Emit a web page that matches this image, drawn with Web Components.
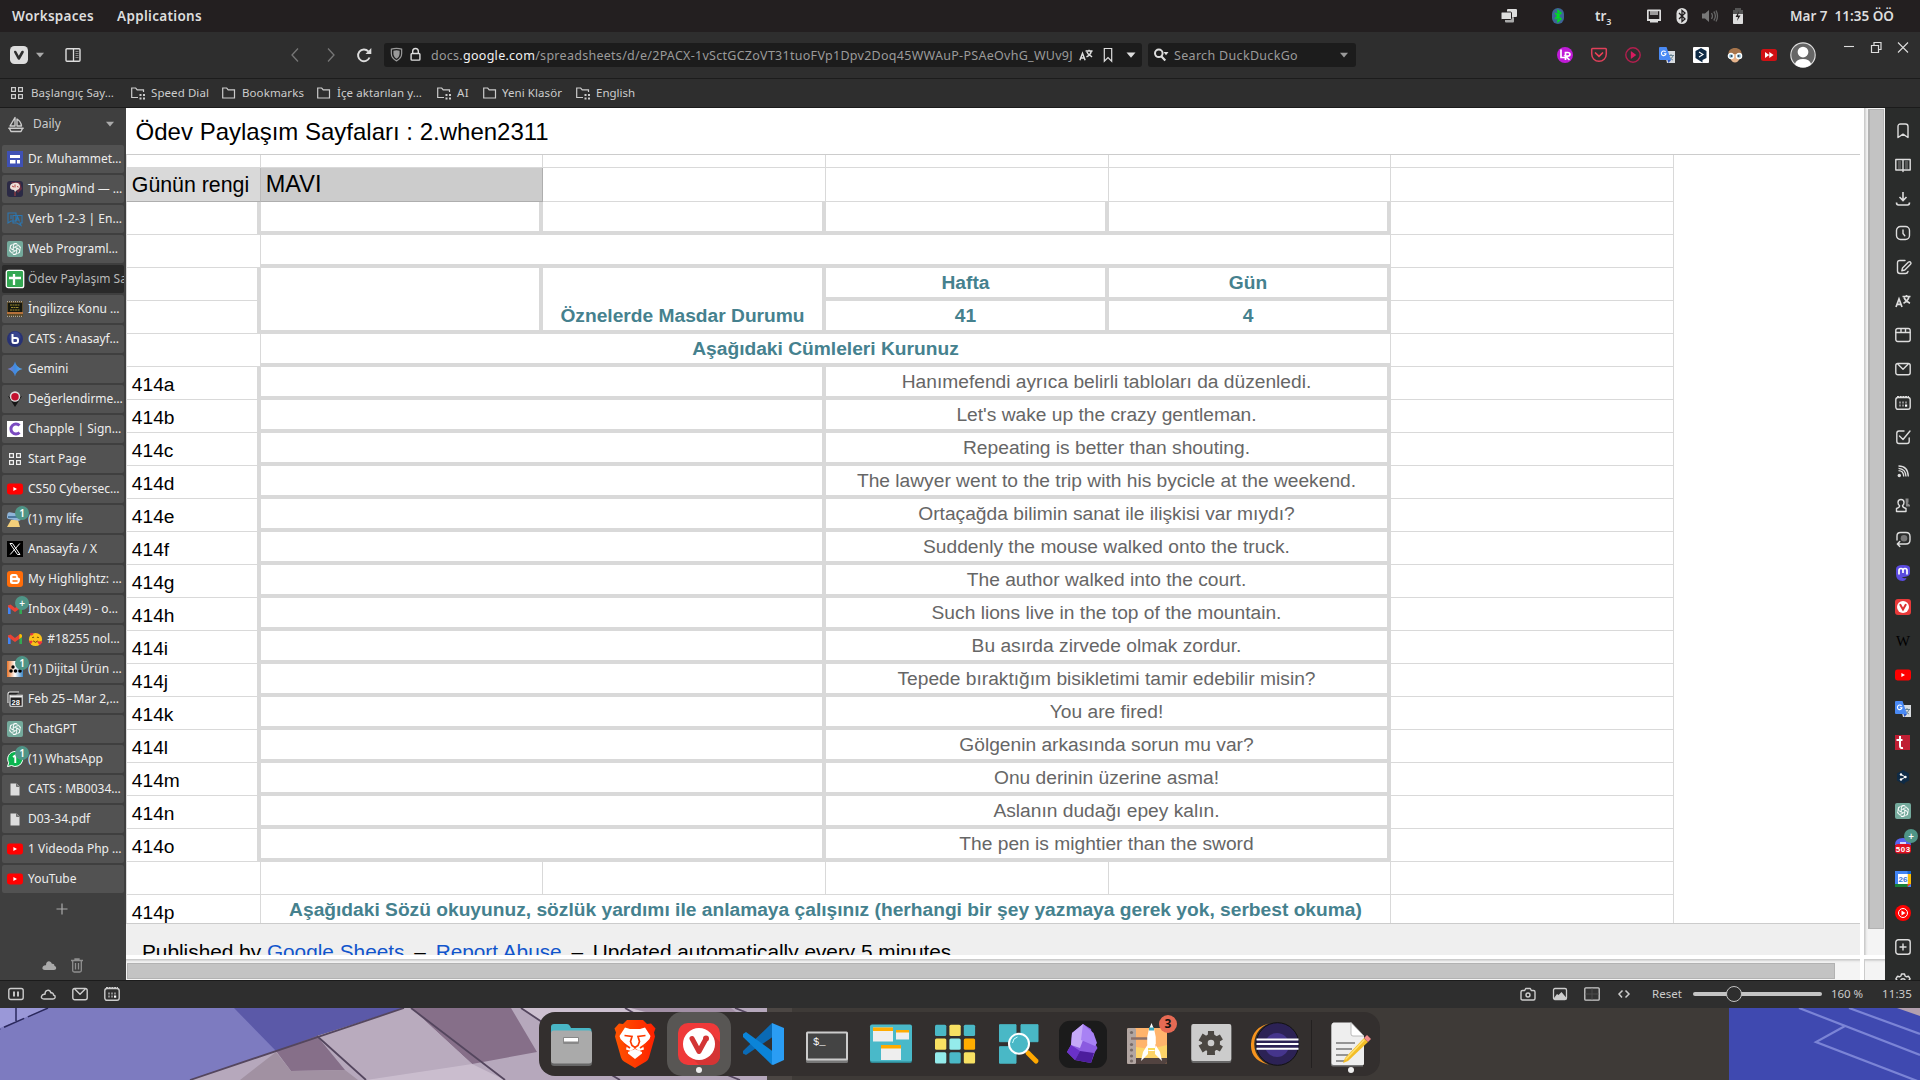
<!DOCTYPE html>
<html lang="tr"><head><meta charset="utf-8"><title>Ödev Paylaşım Sayfaları</title>
<style>html,body{margin:0;height:100%;overflow:hidden;background:#3e3a37}body{font-family:"Noto Sans","Liberation Sans",sans-serif}</style></head>
<body><desk-top></desk-top>
<script>
const S='fill="none" stroke="currentColor" stroke-width="1.4" stroke-linecap="round" stroke-linejoin="round"';
const gpt='<rect width="16" height="16" rx="2" fill="#74aa9c"/><g fill="none" stroke="#fff" stroke-width=".9">'+[0,60,120,180,240,300].map(a=>`<path d="M8 6l2-1.1c1.6-.8 3.6.4 3.4 2.3" transform="rotate(${a} 8 8)"/>`).join('')+'<path d="M8 6l1.8 1v2L8 10 6.2 9V7z"/><circle cx="8" cy="8" r="5.3" stroke-width=".6"/></g>';
const yt='<rect y="2.5" width="16" height="11" rx="2.4" fill="#f00"/><path d="M6.4 5.9v4.2L10 8z" fill="#fff"/>';
const gm='<path d="M1 4v9h2.6V7.2z" fill="#4285f4"/><path d="M15 4v9h-2.6V7.2z" fill="#34a853"/><path d="M1 4.4l2.6-1 4.4 3.500 4.400-3.500L15 4.400v1.500L8 11 1 6z" fill="#ea4335"/><path d="M12.400 3.400c1.200-.8 2.600 0 2.600 1.400V6l-2.600 2z" fill="#fbbc04"/>';
const gt='<path d="M5 4h11v12H8z" fill="#d8dce0"/><path d="M9 8.500h6M12 7v1.500M14 8.500c-.5 2-2 3.500-4 4.500M10.500 10c1 1.500 2 2.500 3.500 3" stroke="#607d8b" fill="none" stroke-width=".9"/><path d="M0 1q0-1 1-1h6.500L12 13H1q-1 0-1-1z" fill="#4a8af4"/><path d="M8.500 13h3.500l-2.500 3z" fill="#2a56c6"/><path d="M6.600 5A2.300 2.300 0 1 0 7 6.700H4.900" fill="none" stroke="#fff" stroke-width="1.100"/>';
const page='<path d="M3.500 2.500h6l3 3v9h-9z" fill="#ddd"/><path d="M9.500 2.500v3h3" fill="#888" stroke="#555" stroke-width=".7"/>';
const mail=`<rect x=".8" y="2.500" width="14.400" height="11.300" rx="2" ${S}/><path d="M3 3.200l5 5 5-5" ${S}/>`;
const cal=`<rect x=".8" y="2.500" width="14.400" height="11.800" rx="2.200" ${S}/><path d="M2 2h12" stroke="currentColor" stroke-width="2.200" stroke-dasharray="2 .7"/><path d="M4 7.500h8M4 10.500h5.500" stroke="#8a8a8a" stroke-width="1.800" stroke-dasharray="2 1"/><rect x="10" y="9.500" width="2.200" height="2.200" fill="#fff"/>`;
const folder='<path d="M1.700 3h4l1.500 1.800h6.300V13H1.700z" fill="none" stroke="currentColor" stroke-width="1.200"/>';
const grid='<g fill="none" stroke="currentColor" stroke-width="1.200"><rect x="2.600" y="2.600" width="3.800" height="3.800"/><rect x="9.600" y="2.600" width="3.800" height="3.800"/><rect x="2.600" y="9.600" width="3.800" height="3.800"/><rect x="9.600" y="9.600" width="3.800" height="3.800"/></g>';
const trans='<path d="M1 14l3-8 3 8M2 11.300h4M7.500 3.500h8M11.500 2v1.500M14 3.700c-.6 3-2.500 5-5.500 6.500M9 4.500c1 2.500 3 4.500 6 5.700" fill="none" stroke="currentColor" stroke-width="1.700"/>';
const cloudp='M4 13h9c2.700 0 3-3.400.5-4C13.500 7 12 6.500 11 7 9.500 2.500 4.800 4 5 8.300 1.500 7.500-.5 13 4 13z';
const I={
viv:'<rect x="-1" y="-1" width="18" height="18" rx="4.500" fill="#ddd"/><path d="M4.300 5l3.500 6.500L11.500 5" fill="none" stroke="#2e2e2e" stroke-width="2.600" stroke-linecap="round" stroke-linejoin="round"/>',
caret:'<path d="M4 5.700h8L8 10.500z" fill="currentColor"/>',
panel:'<rect x="1" y="1.700" width="14" height="12.600" rx="1" fill="none" stroke="currentColor" stroke-width="1.400"/><path d="M8.500 2v12" stroke="currentColor" stroke-width="1.300"/><path d="M10.500 4.500h3M10.500 6.500h3M10.500 8.500h3M10.500 10.500h3" stroke="#888"/>',
back:'<path d="M11 1.500L5 8l6 6.500" fill="none" stroke="currentColor" stroke-width="1.300"/>',
fwd:'<path d="M5 1.500L11 8l-6 6.500" fill="none" stroke="currentColor" stroke-width="1.300"/>',
reload:'<path d="M13.500 10.500A5.900 5.900 0 1 1 12.300 4.300" fill="none" stroke="currentColor" stroke-width="1.900"/><path d="M15.300 1v6H9.500z" fill="currentColor"/>',
shield:'<path d="M2.500 2.300Q8 .7 13.500 2.300V7Q13.500 12 8 14.800 2.500 12 2.500 7z" fill="none" stroke="currentColor" stroke-width="1.300"/><path d="M4.700 4Q8 3 11.300 4v3q0 3.500-3.300 5.500Q4.700 10.500 4.700 7z" fill="#999"/>',
lock:'<rect x="3.300" y="7" width="9.400" height="7" rx="1" fill="none" stroke="#ddd" stroke-width="1.500"/><path d="M5 7V4.600a3 3 0 0 1 6 0V7" fill="none" stroke="#ddd" stroke-width="1.500"/>',
trans,bm:'<path d="M4.300 1.500h7.400v12.700L8 10.500l-3.700 3.700z" fill="none" stroke="currentColor" stroke-width="1.200"/>',
mag:'<circle cx="5.800" cy="6.300" r="3.800" fill="none" stroke="currentColor" stroke-width="2"/><path d="M8.500 9.500l3.800 4" stroke="currentColor" stroke-width="2.200"/><path d="M10.500 5h5L13 8.200z" fill="currentColor"/>',
grid,folder,sfolder:'<path d="M8 12.500H1.700V3h4l1.500 1.800h6.300V7" fill="none" stroke="currentColor" stroke-width="1.200"/><path d="M9.500 9h2v2h-2zM13 9h2v2h-2zM9.500 12.500h2v2h-2zM13 12.500h2v2h-2z" fill="currentColor"/>',
wins:'<rect x="6" y="1" width="10" height="8" rx="1" fill="#ddd"/><rect x="4" y="9" width="9" height="5.500" rx="1" fill="#aaa"/><rect x="0" y="4" width="10.500" height="7.500" rx="1" fill="#ddd" stroke="#231f20"/>',
btb:'<rect x="2" width="12" height="16" rx="6" fill="#3e6496"/><path d="M5 5l6 6-3 2.500v-11L11 5l-6 6" fill="none" stroke="#0d2" stroke-width="1.500"/>',
btw:'<rect x="2.500" width="11" height="16" rx="5.500" fill="#ddd"/><path d="M5 5l6 6-3 2.500v-11L11 5l-6 6" fill="none" stroke="#231f20" stroke-width="1.300"/>',
eth:'<path d="M2 1.500h12q1 0 1 1V13h-3v1.500H4V13H1V2.500q0-1 1-1z" fill="#ddd"/><path d="M2.700 3.200h10.600V11H2.700z" fill="#231f20"/><path d="M5 3v4M7 3v4M9 3v4M11 3v4" stroke="#ddd" stroke-width="1.300"/>',
spk:'<path d="M0 5.500h3l4-3.500v12L3 10.500H0z" fill="#777"/><path d="M9.500 5q2 3 0 6M11.800 3.500q3.200 4.500 0 9M14 2.500q3 5.500 0 11" fill="none" stroke="#666" stroke-width="1.300"/>',
bat:'<path d="M5 0h6v2h2v14H3V2h2z" fill="#555"/><path d="M3 6h10v9q0 1-1 1H4q-1 0-1-1z" fill="#ddd"/><path d="M9 3L5.500 9H8l-1 4 3.500-5.500H8z" fill="#231f20"/>',
lr:'<circle cx="8" cy="8" r="8" fill="#c01bd8"/><path d="M4 2.500v8h3.800M8.500 13V5.500h2.200c3 0 3 3.700 0 3.700H8.500l4 3.800" fill="none" stroke="#fff" stroke-width="1.700"/>',
pocket:'<path d="M1.500 1.500h13q.8 0 .8.8V7a7.300 7.300 0 0 1-14.600 0V2.300q0-.8.8-.8z" fill="none" stroke="#e0405a" stroke-width="1.500"/><path d="M4.500 6L8 9.300 11.500 6" fill="none" stroke="#ef4056" stroke-width="1.700" stroke-linecap="round"/>',
play:'<circle cx="8" cy="8" r="7.200" fill="none" stroke="#b21f4e" stroke-width="1.400"/><path d="M5.800 4v8l5.500-4z" fill="#d81b60"/>',
gt,deepl:'<rect width="16" height="16" rx="1" fill="#fff"/><path d="M8 1l5.500 3v7L9.500 13v2.500L2.500 11V4z" fill="#0f2b46"/><path d="M6 5l4 2.500L6 10" fill="none" stroke="#fff" stroke-width="1.100"/>',
face:'<path d="M1.500 8C1 3 4 1 8 1s7 2 6.500 7z" fill="#a6754c"/><path d="M3 7h10v4q-2 4.500-5 4.500T3 11z" fill="#e6b48c"/><circle cx="4" cy="9" r="2.700" fill="#9fc8dc" stroke="#fff" stroke-width="1.200"/><circle cx="12" cy="9" r="2.700" fill="#9fc8dc" stroke="#fff" stroke-width="1.200"/><circle cx="4.500" cy="9" r="1" fill="#345"/><circle cx="11.500" cy="9" r="1" fill="#345"/>',
ytff:'<rect y="2" width="16" height="12" rx="2.500" fill="#d01014"/><path d="M4 5v6l4.300-3zM8.300 5v6l4.300-3z" fill="#fff"/>',
avatar:'<circle cx="8" cy="8" r="7.500" fill="#666" stroke="#ddd" stroke-width=".7"/><circle cx="8" cy="6.200" r="3.300" fill="#fff"/><path d="M3 13.500Q4 10.500 8 10.500t5 3Q11 15.600 8 15.600T3 13.500z" fill="#fff"/>',
min:'<path d="M3 6.500h10" stroke="currentColor" stroke-width="1.100"/>',
rest:'<path d="M3.500 5.500h7v7h-7zM6 5.500v-3h7v7h-2.500" fill="none" stroke="currentColor" stroke-width="1.200"/>',
close:'<path d="M3 2.500l10 10M13 2.500l-10 10" stroke="currentColor" stroke-width="1.100"/>',
sail:`<g ${S} stroke-width="1.100"><path d="M7 1.500L2 10h5zM9 3v7h4.500Q13 5.500 9 3zM.8 12.300h14.400M3 15.500h10l1.500-3M3 15.500l-1.500-3"/></g>`,
sites:'<rect width="16" height="16" fill="#3f51b5"/><path d="M3 4h10v3H3zM3 9h5.500v3.500H3zM10 9h3v3.500h-3z" fill="#fff"/>',
typing:'<rect width="16" height="16" rx="3" fill="#2b2a45"/><path d="M4 1h9l2 7-4 4z" fill="#7a3040" opacity=".8"/><path d="M3 6q0-3.500 4-4 5-1 6 3 0 3-3 4l-2 2-1-2Q3 9 3 6z" fill="#eedfd6"/><path d="M5 5l2 1M8 3.500v3M10 5.500l1.500.5M8 11v4" stroke="#b04040" stroke-width="1"/>',
verb:'<path d="M1 2h8v8H4l-3 2zM6 4.500h9V12h-2l1 2.500-4-2.500H6z" fill="none" stroke="#2c76b0" stroke-width="1.100"/><path d="M4 4v4M8.500 10.500l2-5 2 5M9 9h3" stroke="#2c76b0" fill="none" stroke-width="1.200"/>',
gpt,sheets:'<rect x="-.7" y="-.7" width="17.400" height="17.400" rx="2" fill="#34a853" stroke="#fff" stroke-width="1.300"/><path d="M2 7h12M7 3v11" stroke="#fff" stroke-width="2.300"/>',
ing:'<rect width="16" height="16" fill="#5a4a2a"/><rect x="1" y="2" width="14" height="9" fill="#16180f"/><path d="M3 4h10M4 6.500h8M3 9h10" stroke="#9a8a30" stroke-dasharray="2 .5"/><path d="M0 12h16" stroke="#b5713a" stroke-width="2"/><path d="M0 .7h16M0 15.300h16" stroke="#bbb" stroke-width="1" stroke-dasharray="1 1"/>',
bbb:'<circle cx="8" cy="8" r="8" fill="#283274"/><circle cx="8" cy="6" r="5.500" fill="#4a57a5" opacity=".5"/><path d="M5.500 3v7.500q0 1.500 1.500 1.500h2q2 0 2-2V9q0-2-2-2H6" fill="none" stroke="#fff" stroke-width="2"/>',
gem:'<defs><linearGradient id="g"><stop stop-color="#8a7bc8"/><stop offset=".5" stop-color="#3f8ae0"/><stop offset="1" stop-color="#5aa9f0"/></linearGradient></defs><path d="M8 .5Q9.300 6.700 15.500 8 9.300 9.300 8 15.500 6.700 9.300.5 8 6.700 6.700 8 .5z" fill="url(#g)"/>',
deg:'<path d="M1 5l7 11 7-11-3 1-4 5-4-5z" fill="#151515"/><circle cx="8" cy="5.500" r="5.200" fill="#ddd"/><path d="M8 2a3 3 0 0 1 0 7.500A3 3 0 0 1 8 2z" fill="#c3122f"/><path d="M5 4h6M5 7h6" stroke="#c3122f" stroke-width="1.500"/>',
chap:'<rect width="16" height="16" fill="#fff"/><path d="M12.500 4.500a5 5 0 1 0 0 7" fill="none" stroke="#7b4bc0" stroke-width="3"/>',
yt,life:'<path d="M4 9h7l2 7H0z" fill="#f3cf7a"/><rect x="0" y="2" width="14" height="7" rx="2" fill="#8fb4d8" transform="rotate(10 7 6)"/><path d="M1 6h9" stroke="#4b779f" stroke-width="2"/>',
x:'<rect width="16" height="16" fill="#000"/><path d="M3 2.500h2.500l7.500 11h-2.500zM12.800 2.500L3.200 13.500" fill="none" stroke="#fff" stroke-width="1"/>',
blog:'<rect width="16" height="16" rx="3" fill="#ff6d0a"/><path d="M5.500 3h2.800q2.500 0 2.500 2.700 0 1 1 1 1.200 0 1.200 1.500 0 4.800-3.500 4.800h-4q-2.500 0-2.500-2.500V5.500Q3 3 5.500 3z" fill="#fff"/><path d="M6 6h2.500M6 10h4" stroke="#ff6d0a" stroke-width="1.500" stroke-linecap="round"/>',
gm,dij:'<defs><linearGradient id="d"><stop stop-color="#e8762c"/><stop offset=".5" stop-color="#fff"/><stop offset="1" stop-color="#3a86c8"/></linearGradient></defs><rect width="16" height="16" fill="url(#d)"/><circle cx="4" cy="10" r="1.800"/><circle cx="8.500" cy="10" r="1.800"/><circle cx="13" cy="10" r="1.800"/><circle cx="6" cy="6" r="1.700"/>',
notion:'<path d="M1 12V3q0-2 2-2h9M3 4.300h12.200v11H4q-1 0-1-1z" fill="#222" stroke="#eee" stroke-width="1.100"/><path d="M3 5.800h12" stroke="#eee" stroke-width="1.500"/><text x="4.500" y="14" font-size="7.500" font-weight="bold" fill="#fff" font-family="Liberation Sans">28</text>',
wa:'<path d="M8 .5a7.500 7.500 0 1 1-3.500 14L.5 15.600l1.200-3.800A7.500 7.500 0 0 1 8 .5z" fill="#0ab550" stroke="#fff"/><path d="M6 6l2.300-1.500V12" fill="none" stroke="#fff" stroke-width="1.900"/>',
page,cloud:`<path d="${cloudp}" fill="#aaa"/>`,trash:'<path d="M2 3.500h12M6 3.500V2h4v1.500M3.700 4v9.500q0 1.500 1.500 1.500h5.600q1.500 0 1.500-1.500V4M6.500 6v6.500M9.500 6v6.500" fill="none" stroke="#909090" stroke-width="1.300"/>',
plus:'<path d="M8 2.500v11M2.500 8h11" stroke="#aaa" stroke-width="1.200"/>',
pause:`<rect x=".8" y="2.500" width="14.400" height="11" rx="2" ${S}/><path d="M6 5.500v5M10 5.500v5" stroke="currentColor" stroke-width="1.900"/>`,
cloudo:`<path d="${cloudp}" ${S}/>`,mail,cal,
cam:`<path d="M2.500 4.500h2.200l1-2h4.600l1 2h2.200q1.500 0 1.500 1.500v6.500q0 1.500-1.500 1.500h-11Q1 14 1 12.500V6q0-1.500 1.500-1.500z" ${S}/><circle cx="8" cy="9" r="2" ${S}/>`,
img:'<rect x="1.500" y="2.500" width="13" height="11" rx="1.500" fill="none" stroke="currentColor" stroke-width="1.300"/><path d="M2 12l3-4 1.500 1L9.500 6l5 6v1.500H2z" fill="currentColor"/>',
tile:'<rect x=".8" y="1.800" width="14.400" height="12.400" rx="1" fill="#333" stroke="currentColor" stroke-width="1.300"/><path d="M8 2.500v11M1.500 8h13" stroke="#4a4a4a"/>',
code:'<path d="M6.500 4.500L3 8l3 3.500M9.500 4.500L13 8l-3.500 3.500" fill="none" stroke="currentColor" stroke-width="1.500"/>',
pbm:`<path d="M3 14.500V3.500Q3 1 5.500 1h5Q13 1 13 3.500v11l-5-3.300z" ${S}/>`,
book:`<path d="M8 3v11.500M.8 2.500h14.400V13H.8z" ${S}/><path d="M3 5h3M3 7h3M3 9h3M3 11h3M10 5h3M10 7h3M10 9h3M10 11h3" stroke="#888"/>`,
dl:'<path d="M8 1v8M4.500 6L8 9.500 11.500 6M1.500 11.500q0 2.500 2 2.500h9q2 0 2-2.500" fill="none" stroke="currentColor" stroke-width="1.600"/>',
hist:`<rect x="1.500" y="1.500" width="13" height="13" rx="4" ${S}/><path d="M8 5v3.500l1.800 2.200" ${S}/>`,
note:`<path d="M10 1.500H5Q2.500 1.500 2.500 4v8q0 2.500 2.500 2.500h5.500q2 0 2.500-2M7.500 9L13.500 3q1.500-.8 2.300.5.500 1-.3 1.700L9.800 11l-3 .8z" ${S}/>`,
win:`<rect x=".8" y="1.500" width="14.400" height="13" rx="2" ${S}/><path d="M1 5.500h14M6 2v2.500M10.500 2v2.500" ${S}/>`,
task:`<path d="M9 2H4Q1.800 2 1.800 4.200v8Q1.800 14.500 4 14.500h8q2.200 0 2.200-2.300V9M4.500 7l3.500 3.500L15 2" ${S}/>`,
rss:'<circle cx="4.300" cy="12.500" r="1.700" fill="currentColor"/><path d="M3.500 7.700q5 0 5.200 5.800M3.500 3q9.500 0 9.800 10.500M3.500 5.300q7.300.5 7.500 8.200" fill="none" stroke="currentColor" stroke-width="1.300"/>',
cont:`<path d="M10.500 1.500h3v4l-1 .5 2.500 2v1.500h-4z" fill="#888"/><path d="M6 2.500q3 0 3 3 0 2-1.500 3 0 2 3.500 3v3H1.500v-3q3.500-1 3-3Q3 7.500 3 5.500q0-3 3-3z" ${S}/>`,
sess:`<path d="M2 9V5Q2 1.500 5.500 1.500h5.500q4 0 4 4V9q0 4-4 4H2.500M4.800 10.500L2.300 13l2.500 2.500" ${S}/><circle cx="9" cy="7.200" r="3.300" fill="#777"/>`,
mast:'<path d="M8 0q7 0 7 3v5q0 3.500-6 4-2 0-2 .5 1 1 4.500.5-1 3-4 3Q1 16 1 9V4Q1 0 8 0z" fill="#5b4be0"/><path d="M4 9.500V5.500q0-2 2-2t2 2V8 5.500q0-2 2-2t2 2v4" fill="none" stroke="#fff" stroke-width="1.700"/>',
vred:'<rect width="16" height="16" rx="3" fill="#e83a3a"/><circle cx="8" cy="8" r="6" fill="#fff"/><path d="M5.300 5.800l2.700 4.700 2.700-4.700" fill="none" stroke="#d33" stroke-width="2" stroke-linecap="round"/>',
wiki:'<text x="1" y="13" font-size="14" fill="#000" textLength="14" lengthAdjust="spacingAndGlyphs" font-family="Liberation Serif">W</text>',
tur:'<rect width="15" height="15" fill="#c01e33"/><path d="M5 1v10q0 2.500 3 2M1.500 5h6" fill="none" stroke="#fff" stroke-width="2"/>',
deepd:'<path d="M8 1l6 3.500v7L9.500 14v1.500L2 11.500v-7z" fill="#0f2b46"/><path d="M6 5.500l4.500 2.500L6 10.500" fill="none" stroke="#fff"/><circle cx="6" cy="5.500" r="1.200" fill="#fff"/><circle cx="6" cy="10.500" r="1.200" fill="#fff"/><circle cx="10.500" cy="8" r="1.200" fill="#fff"/>',
m503:'<path d="M0 8Q0 1 8 1t8 7z" fill="#5865f2"/><path d="M5 6h6" stroke="#fff" stroke-width="1.500"/><rect y="7" width="16" height="9.500" rx="3" fill="#e01020"/><text x=".8" y="14.600" font-size="8" font-weight="bold" fill="#fff" textLength="14.400" font-family="Liberation Sans">503</text>',
gcal:'<rect width="16" height="16" fill="#4285f4"/><rect x="12.500" y="3" width="3.500" height="10" fill="#fbbc04"/><rect y="13" width="13" height="3" fill="#188038"/><path d="M12.500 13H16l-3.500 3z" fill="#ea4335"/><path d="M12.500 0H16v3h-3.500z" fill="#1967d2"/><rect x="3" y="3" width="9.800" height="10" fill="#fff"/><text x="3.600" y="11.200" font-size="8" font-weight="bold" fill="#3a78d8" font-family="Liberation Sans">26</text>',
ytm:'<circle cx="8" cy="8" r="8" fill="#f00"/><circle cx="8" cy="8" r="4.500" fill="none" stroke="#fff"/><path d="M6.500 5.500v5l4-2.500z" fill="#fff"/>',
add:`<rect x=".8" y=".8" width="14.400" height="14.400" rx="2.500" ${S}/><path d="M8 5v6M5 8h6" ${S}/>`,
gear:`<path d="M6.500 1h3l.6 2 1.500.8 2-.5 1.500 2.600-1.500 1.500v1.500l1.500 1.500-1.500 2.500-2-.5-1.500.8-.6 2h-3l-.6-2-1.500-.8-2 .5L.900 10.400l1.500-1.500V7.400L.900 5.900l1.500-2.600 2 .5L5.900 3z" ${S}/><circle cx="8" cy="8" r="2.300" ${S}/>`,
love:'<circle cx="8" cy="8" r="7" fill="#fcc21b"/><path d="M4.500 6q1-1 2 0M9.500 6q1-1 2 0M5.500 9.500q2.500 3 5 0" fill="none" stroke="#5b3a10"/><path d="M2 2l2 2 2-2-1-1-1 .5L3 1zM10 11l2.500 3 3-3-1.500-1.500-1.500.7L11 9.500zM1 10l2 3 2-3-1-1-1 .5L2 9z" fill="#f0353f"/>'
};
const D={
files:'<path d="M4 15V7q0-3 3-3h13q2 0 3 2l1 2h18q2.500 0 2.500 3v4z" fill="#49b6c6"/><rect x="4" y="12" width="41" height="34" rx="3" fill="#666"/><rect x="4" y="10.500" width="41" height="33" rx="3" fill="#aaa"/><rect x="16" y="17" width="16" height="7" rx="1" fill="#888"/><rect x="17" y="18" width="14" height="3.500" fill="#fff"/>',
brave:'<defs><linearGradient id="b"><stop stop-color="#ff5500"/><stop offset="1" stop-color="#ff2000"/></linearGradient></defs><path d="M16 0h16l4 4 4-.5 4.500 5-1.500 4 1 4-6 21q-.5 2-3 4L24 48 13 41.500q-2.500-2-3-4l-6-21 1-4-1.500-4L8 3.500l4 .5z" fill="url(#b)"/><path d="M24 9l5 0 5-1.500 5.500 8.500-1 3-6.500 6.500 1 4-5 1.500L24 28l-4 3-5-1.500 1-4L9.500 19l-1-3L14 7.500 19 9z" fill="#fff"/><path d="M17 32l7-3 7 3v1.500L24 39l-7-5.500z" fill="#fff"/><path d="M13.500 15.500l7.500 1-1.500 5 1.500 4 3 2 3-2 1.500-4-1.500-5 7.500-1M13 24l6 4M35 24l-6 4" fill="none" stroke="#ff3a00" stroke-width="1.700"/>',
viv:'<rect x="3" y="3" width="42" height="42" rx="10" fill="#ef3939"/><path d="M35 12l10 10v15q-2 8-9 8H24L14 35z" fill="#d53434"/><circle cx="24" cy="24" r="16" fill="#fff"/><path d="M17 18.500l7 13 6-11" fill="none" stroke="#d33535" stroke-width="5" stroke-linecap="round" stroke-linejoin="round"/><circle cx="31" cy="18.500" r="3" fill="#d33535"/>',
code:'<path d="M33 3L4 31v2.500L7 35 35 16z" fill="#0a6ab5"/><path d="M4 14v3l29 28 3-12L7 12z" fill="#0b84d8"/><path d="M33 3l12 5v32l-11 5q-1 0-1-1z" fill="#2a9df4"/>',
term:'<rect x="3" y="13" width="42" height="30" rx="1.500" fill="#777"/><rect x="3" y="11.500" width="42" height="29" rx="1.500" fill="#ccc"/><rect x="5" y="13.500" width="38" height="25" fill="#444"/><text x="10" y="24.500" font-size="10.500" fill="#fff" font-family="Liberation Mono">$_</text>',
wins:'<rect x="3" y="6" width="42" height="37" rx="2" fill="#2f8793"/><rect x="3" y="4.500" width="42" height="37" rx="2" fill="#49b9c9"/><path d="M6 7.500h20v14H6zM29 10h13v9.500H29zM14 25h20v15H14z" fill="#eee"/><path d="M6 7.500h20v3.500H6zM29 10h13v2.500H29zM14 25h20v3.500H14z" fill="#ffab00"/>',
grid:['#4ab8c6','#f8e163','#4ab8c6','#f8e163','#94ebeb','#ffad00','#94ebeb','#4ab8c6','#f8e163'].map((c,i)=>`<rect x="${4+(i%3)*14.4}" y="${4.7+(i/3|0)*13.8}" width="11.300" height="11.300" rx="1.500" fill="${c}"/>`).join(''),
find:'<path d="M4.500 4.700h16.500v17H4.500zM26 4.700h17v17H26zM4.500 26.700H21v16.500H4.500z" fill="#49b8c6" stroke="#49b8c6" stroke-linejoin="round"/><path d="M33 33l8 8" stroke="#ffa800" stroke-width="5" stroke-linecap="round"/><circle cx="24" cy="23.700" r="10" fill="#49b8c6" stroke="#fff" stroke-width="2"/><path d="M17.500 23q.5-5 5-6" fill="none" stroke="#cff" stroke-width="1"/>',
obs:'<rect y=".7" width="48" height="47.300" rx="11" fill="#1b1b1b"/><path d="M24 4l-11 9-1 12-4 7 8 8 16 3 4-11 2.500-4-4.500-9-2-10z" fill="#8b5be0"/><path d="M24 4l-11 9-1 12 9 3 3-8z" fill="#c5aaf8"/><path d="M24 4l-2 16 14 6 2-3-3.500-10z" fill="#a882f4"/><path d="M12 25l9 6-5 9-8-8z" fill="#6a31c8"/><path d="M16 40l5-9 14 2-3 10z" fill="#4c1d9c"/>',
plan:'<rect x="4" y="8" width="40" height="36" rx="2" fill="#ffb46c"/><path d="M13 27l14 2 17-4v14H13z" fill="#fdd368"/><path d="M4 38h40v4q0 2-2 2H6q-2 0-2-2z" fill="#524340"/><rect x="4" y="8" width="9" height="36" rx="1.500" fill="#b2a6a2"/><path d="M8 18.500h17" stroke="#8b706a" stroke-width="2.500"/><g fill="#776b68"><circle cx="8.500" cy="12.500" r="1.600"/><circle cx="8.500" cy="24.500" r="1.600"/><circle cx="8.500" cy="30" r="1.600"/><circle cx="8.500" cy="36" r="1.600"/><circle cx="8.500" cy="41" r="1.600"/></g><path d="M28.500 3q-7 14-3 28h6q4-14-3-28zM25 24l-5 8-2 9 7-7zM32 24l5 8 2 9-7-7z" fill="#fff"/><path d="M26 9h5" stroke="#3aa6bc" stroke-width="3"/><path d="M25 29h7" stroke="#f8da58" stroke-width="2"/>',
set:'<rect x="4.300" y="6" width="40" height="37" rx="2" fill="#666"/><rect x="4.300" y="4" width="40" height="37" rx="2" fill="#ccc"/><g fill="#4b4742"><circle cx="24" cy="23" r="9"/>'+[0,60,120].map(a=>`<path d="M21 11h6l1 24h-8z" transform="rotate(${a} 24 23)"/>`).join('')+'</g><circle cx="24" cy="23" r="3.300" fill="#ccc"/>',
ecl:'<path d="M22 2.500A21.700 21.700 0 0 0 22 45.500Q-1 42 0 24T22 2.500z" fill="#f7941e"/><circle cx="26.500" cy="24" r="21.300" fill="#2c2255" stroke="#111"/><circle cx="26" cy="25" r="12" fill="#45358c"/><path d="M5.500 18.700h42v10.800h-42z" fill="#2c2255"/><path d="M5.500 19.500h42M5.500 24h42M5.500 28.800h42" stroke="#fff" stroke-width="2.100"/>',
edit:'<path d="M6 4h18l12 12v30.500H6q-2 0-2-2V6q0-2 2-2z" fill="#777"/><path d="M6.500 2.500H24L37 16v28q0 1-1 1H6.500q-2 0-2-2v-38q0-2 2-2.500z" fill="#eee"/><path d="M24 2.500L37 16H26q-2 0-2-2z" fill="#fff" stroke="#aaa" stroke-width=".8"/><path d="M9 23h19M9 29h16M9 35h12M9 41h9" stroke="#777" stroke-width="1.500"/><path d="M18 38l19-20 4 4-20 19-5 2z" fill="#f2bd27"/><path d="M18.500 39.500l19-20" stroke="#ffe070" stroke-width="1.500"/><path d="M37 18l3-3 4 4-3 3z" fill="#f38b8b"/>'
};
const reg=(n,css,html,init)=>{const t=document.createElement('template');t.innerHTML=`<style>*{box-sizing:border-box}${css}</style>${html}`;
customElements.define(n,class extends HTMLElement{connectedCallback(){if(this.shadowRoot)return;this.attachShadow({mode:'open'}).append(t.content.cloneNode(true));init&&init(this,this.shadowRoot)}})};
/* Lays items out in a flex row; each entry is [left, width, markup]. */
const row=items=>{let e=0;return items.map(([x,w,h])=>{const m=x-e;e=x+w;return `<div class="i" style="margin-left:${m}px;width:${w}px">${h}</div>`}).join('')};
const ic=(n,s=16,c)=>`<ui-icon name="${n}" size="${s}"${c?` style="color:${c}"`:''}></ui-icon>`;
const fl=(t,w)=>`<fit-label w="${w}">${t}</fit-label>`;
const ROW='.i{flex:none;display:flex;align-items:center;white-space:nowrap}';
reg('ui-icon',':host{display:block;flex:none}svg{display:block;width:100%;height:100%;overflow:visible}','',(h,r)=>{const s=h.getAttribute('size')||16;h.style.width=h.style.height=s+'px';r.innerHTML+=`<svg viewBox="0 0 16 16">${I[h.getAttribute('name')]}</svg>`});
/* Label whose tracking adapts so the text fills the given width. */
reg('fit-label',':host{display:block;white-space:nowrap}span{display:inline-block;white-space:pre}','<span><slot></slot></span>',(h,r)=>{const s=r.querySelector('span'),w=+h.getAttribute('w');h.style.width=w+'px';const n=h.textContent.length;s.style.letterSpacing=(w-s.getBoundingClientRect().width)/n+'px'});
reg('system-bar',':host{display:flex;align-items:center;height:32px;background:#231f20;color:#ddd;font:600 13.500px "Noto Sans",sans-serif}sub{font-size:9px;line-height:0}fit-label,span{padding-bottom:1px}'+ROW,
row([[12,82,fl('Workspaces',82)],[117,85,fl('Applications',85)],[1501,16,ic('wins')],[1550,16,ic('btb')],[1595,18,'<span>tr<sub>3</sub></span>'],[1646,16,ic('eth')],[1674,16,ic('btw')],[1702,16,ic('spk')],[1730,16,ic('bat')],[1790,104,fl('Mar 7&nbsp; 11:35 ÖÖ',104)]]));
reg('nav-bar',':host{display:flex;height:47px;padding-bottom:1px;align-items:center;background:#2e2e2e;border-bottom:1px solid #1c1c1c;color:#ddd;font-size:12.500px}.f{background:#1c1c1c;height:24px;border-radius:3px;display:flex;align-items:center;width:100%}fit-label{padding-top:1px}.g{color:#9a9a9a}b{font-weight:400;color:#f2f2f2}.w{align-self:flex-start;margin-top:8px;display:flex}'+ROW,
row([[11,16,ic('viv')],[32,16,ic('caret',16,'#aaa')],[65,16,ic('panel')],[287,16,ic('back',16,'#777')],[323,16,ic('fwd',16,'#777')],[356,16,ic('reload')],
[384,758,`<div class="f g">${row([[5,15,ic('shield',15)],[24,16,ic('lock',15)],[47,642,fl('docs.<b>google.com</b>/spreadsheets/d/e/2PACX-1vSctGCZoVT31tuoFVp1Dpv2Doq45WWAuP-PSAeOvhG_WUv9J',642)],[695,14,ic('trans',14,'#ddd')],[716,16,ic('bm',16,'#ddd')],[738,16,ic('caret',18,'#ddd')]])}</div>`],
[1148,208,`<div class="f g">${row([[5,16,ic('mag',16,'#ddd')],[26,124,fl('Search DuckDuckGo',124)],[188,16,ic('caret')]])}</div>`],
[1557,16,ic('lr')],[1591,16,ic('pocket')],[1625,16,ic('play')],[1659,16,ic('gt')],[1693,16,ic('deepl')],[1727,16,ic('face')],[1761,16,ic('ytff')],[1790,26,ic('avatar',26)]])+
'<div class="w" style="margin-left:25px;gap:11px">'+ic('min')+ic('rest')+ic('close')+'</div>');
reg('bookmark-bar',':host{display:flex;height:29px;padding-bottom:1px;align-items:center;background:#2e2e2e;border-bottom:1px solid #1b1b1b;color:#ccc;font-size:11.500px}'+ROW,
row([[9,16,ic('grid')],[31,83,fl('Başlangıç Say…',83)],[130,16,ic('sfolder')],[151,58,fl('Speed Dial',58)],[221,16,ic('folder')],[242,62,fl('Bookmarks',62)],[316,16,ic('folder')],[337,85,fl('İçe aktarılan y…',85)],[436,16,ic('sfolder')],[457,12,fl('AI',12)],[482,16,ic('folder')],[502,60,fl('Yeni Klasör',60)],[575,16,ic('sfolder')],[596,39,fl('English',39)]]));
reg('count-badge',':host{position:absolute;width:14px;height:14px;border-radius:7px;background:#4f9587;color:#fff;font:600 10px/14px "Noto Sans",sans-serif;text-align:center}','<slot></slot>');
reg('tab-item',':host{position:relative;display:flex;align-items:center;height:28px;margin:0 2px 2px;padding-left:5px;gap:5px;background:#525252;border-radius:2px;color:#eee;font-size:12px;overflow:hidden;white-space:nowrap}:host([active]){background:#2a2a2a;color:#b8b8b8}count-badge{left:13px;top:1px}span{line-height:16px;display:flex;align-items:center;gap:3px}','<span class="a"></span><span><slot></slot></span>',(h,r)=>{r.querySelector('.a').innerHTML=ic(h.getAttribute('icon'));const b=h.getAttribute('badge');if(b)r.innerHTML+=`<count-badge>${b}</count-badge>`});
const tabs=[['sites','Dr. Muhammet…'],['typing','TypingMind — …'],['verb','Verb 1-2-3 | En…'],['gpt','Web Programl…'],['sheets','Ödev Paylaşım Sa'],['ing','İngilizce Konu …'],['bbb','CATS : Anasayf…'],['gem','Gemini'],['deg','Değerlendirme…'],['chap','Chapple | Sign…'],['grid','Start Page'],['yt','CS50 Cybersec…'],['life','(1) my life','1'],['x','Anasayfa / X'],['blog','My Highlightz: …'],['gm','Inbox (449) - o…','+'],['gm',ic('love',15)+'&#8202;#18255 nol…'],['dij','(1) Dijital Ürün …','1'],['notion','Feb 25\u200a–\u200aMar 2,…'],['gpt','ChatGPT'],['wa','(1) WhatsApp','1'],['page','CATS : MB0034…'],['page','D03-34.pdf'],['yt','1 Videoda Php …'],['yt','YouTube']];
reg('tab-strip',':host{display:flex;flex-direction:column;width:126px;background:#3f3f3f;color:#ccc;font-size:12px}.d{height:37px;display:flex;align-items:center;padding:0 8px 6px;gap:9px}.d span{flex:1;line-height:16px}.p{display:flex;justify-content:center;padding:6px 2px 0 0}.z{margin-top:auto;display:flex;padding:0 0 7px 41px;gap:12px}',
`<div class="d">${ic('sail')}<span>Daily</span>${ic('caret',16,'#aaa')}</div>`+tabs.map(([i,t,b],k)=>`<tab-item icon="${i}"${b?` badge="${b}"`:''}${k==4?' active':''}>${t}</tab-item>`).join('')+`<div class="p">${ic('plus')}</div><div class="z">${ic('cloud')}${ic('trash')}</div>`);
/* Sheet cells: grid placement through attributes, thick edges through "k" flags. */
reg('sheet-cell',':host{display:flex;align-items:flex-end;padding:0 4.800px 3px;border-right:1px solid #d9d9d9;border-bottom:1px solid #d9d9d9;font:19.200px/22px "Liberation Sans",sans-serif;white-space:nowrap;color:#000;min-width:0;min-height:0;overflow:hidden}:host([k*="r"]){border-right-width:4px}:host([k*="b"]){border-bottom-width:4px}:host([c]){justify-content:center;color:#666}:host([t]){justify-content:center;color:#45818e;font-weight:700}:host([g]){border-left:1px solid #d9d9d9}','<slot></slot>',h=>{h.style.gridRow=h.getAttribute('r');h.style.gridColumn=h.getAttribute('col')});
const sent=["Hanımefendi ayrıca belirli tabloları da düzenledi.","Let's wake up the crazy gentleman.","Repeating is better than shouting.","The lawyer went to the trip with his bycicle at the weekend.","Ortaçağda bilimin sanat ile ilişkisi var mıydı?","Suddenly the mouse walked onto the truck.","The author walked into the court.","Such lions live in the top of the mountain.","Bu asırda zirvede olmak zordur.","Tepede bıraktığım bisikletimi tamir edebilir misin?","You are fired!","Gölgenin arkasında sorun mu var?","Onu derinin üzerine asma!","Aslanın dudağı epey kalın.","The pen is mightier than the sword"];
const C=(r,c,a='',t='')=>`<sheet-cell r="${r}" col="${c}" ${a}>${t}</sheet-cell>`;
let cells='';
for(let r=1;r<=24;r++){
const t=r==2?'Günün rengi':r>=8&&r<=22?'414'+'abcdefghijklmno'[r-8]:r==24?'414p':'';
const thick=r==3||r==5||r==6||(r>=8&&r<=22);
cells+=C(r,1,'g'+(thick?' k="r"':'')+(r==2?' style="background:#d9d9d9;font-size:21.330px;line-height:24px;padding-bottom:4px;border-color:#d9d9d9 #bbb #aeaeae #d9d9d9"':''),t)+C(r,6)}
for(const r of [1,2,23])for(let c=2;c<6;c++)cells+=C(r,c,r==2&&c==2?'style="background:#ccc;font-size:23.460px;line-height:26px;padding-bottom:4px;border-color:#aeaeae"':'',r==2&&c==2?'MAVI':'');
for(let c=2;c<6;c++)cells+=C(3,c,'k="rb"');
cells+=C(4,'2/6','k="b"')+C('5/7',2,'k="rb"')+C('5/7',3,'k="rb" t','Öznelerde Masdar Durumu')+C(5,4,'k="rb" t','Hafta')+C(5,5,'k="rb" t','Gün')+C(6,4,'k="rb" t','41')+C(6,5,'k="rb" t','4')+C(7,'2/6','k="b" t','Aşağıdaki Cümleleri Kurunuz');
sent.forEach((s,i)=>cells+=C(8+i,'2/4','k="rb"')+C(8+i,'4/6','k="rb" c',s));
cells+=C(24,'2/6','k="b" t','Aşağıdaki Sözü okuyunuz, sözlük yardımı ile anlamaya çalışınız (herhangi bir şey yazmaya gerek yok, serbest okuma)');
reg('sheet-page',`:host{display:grid;grid-template-columns:1734px 4px 21px;grid-template-rows:847px 4px 21px;width:1759px;background:#fff;overflow:hidden}
.m{overflow:hidden;display:flex;flex-direction:column}.h{flex:none;height:47px;border-bottom:1px solid #ccc;font:24px/46px "Liberation Sans";padding:1px 0 0 9.600px;color:#000}
.c{height:768px;overflow:hidden}.t{display:grid;grid-template-columns:135px 282px 283px 283px 282px 283px;grid-template-rows:13px 34px repeat(22,33px);width:1548px}
.f{flex:none;height:32px;background:#efefef;border-top:1px solid #ccc;overflow:hidden;font:20.800px/24px "Liberation Sans";padding:16px 0 0 16px;white-space:pre;color:#000}.f a{color:#15c;text-decoration:underline}.f s{text-decoration:none;margin:0 9.800px}
.v{grid-column:3;grid-row:1;background:linear-gradient(90deg,#ccc 0 1px,#e8e8e8 2px,#f4f4f4 4px);padding:1px 1px 0 4px}.v i{display:block;height:820px;background:#c3c3c3;border:1px solid #b2b2b2;border-width:1px 1px 1px 2px}
.b{grid-row:3;grid-column:1;background:linear-gradient(#ccc 0 1px,#e8e8e8 2px,#f4f4f4 4px);padding:4px 0 1px 1px}.b i{display:block;height:16px;width:1708px;background:#c3c3c3;border:1px solid #b2b2b2}
.k{grid-row:3;grid-column:3;background:linear-gradient(#ccc 0 1px,#e8e8e8 2px,#f4f4f4 4px);border-left:1px solid #ccc}`,
`<div class="m"><div class="h">Ödev Paylaşım Sayfaları : 2.when2311</div><div class="c"><div class="t">${cells}</div></div><div class="f">Published by <a>Google Sheets</a><s>–</s><a>Report Abuse</a><s>–</s>Updated automatically every 5 minutes</div></div><div class="v"><i></i></div><div class="b"><i></i></div><div class="k"></div>`);
reg('panel-bar',':host{display:flex;flex-direction:column;align-items:center;gap:18px;width:35px;padding:15px 0 0 1px;background:#2a2c2b;color:#ddd;overflow:hidden}div{position:relative}count-badge{left:9px;top:-8px}',
['pbm','book','dl','hist','note','trans','win','mail','cal','task','rss','cont','sess','mast','vred','wiki','yt','gt','tur','deepd','gpt','m503','gcal','ytm','add','gear'].map(n=>n=='m503'?`<div>${ic(n)}<count-badge>+</count-badge></div>`:ic(n)).join(''));
reg('status-bar',':host{display:flex;align-items:center;height:28px;padding-bottom:2px;background:#2e2e2e;border-top:1px solid #1b1b1b;color:#ccc;font-size:11.500px}.s{width:129px;height:4px;border-radius:2px;background:#c4c4c4;display:flex;align-items:center;padding-left:33px}.s i{width:16px;height:16px;border-radius:8px;background:#2e2e2e;border:1.500px solid #c4c4c4}'+ROW,
row([[8,16,ic('pause')],[40,16,ic('cloudo')],[72,16,ic('mail')],[104,16,ic('cal')],[1520,16,ic('cam')],[1552,16,ic('img')],[1584,16,ic('tile')],[1616,16,ic('code')],[1652,30,fl('Reset',30)],[1693,129,'<div class="s"><i></i></div>'],[1831,32,fl('160 %',32)],[1882,30,fl('11:35',30)]]));
reg('dock-item',':host{position:relative;flex:none;display:flex;width:64px;height:64px;align-items:center;justify-content:center;border-radius:15px}:host([active]){background:#585654}svg{width:48px;height:48px;overflow:visible}i{position:absolute;left:29px;bottom:3px;width:6px;height:6px;border-radius:3px;background:#eee}b{position:absolute;right:2px;top:3px;width:18px;height:18px;border-radius:10px;background:#e66a54;color:#111;font:700 12px/18px "Noto Sans";text-align:center}','',(h,r)=>{r.innerHTML+=`<svg viewBox="0 0 48 48">${D[h.getAttribute('name')]}</svg>`+(h.hasAttribute('run')?'<i></i>':'')+(h.hasAttribute('badge')?`<b>${h.getAttribute('badge')}</b>`:'')});
reg('app-dock',':host{display:flex;align-items:center;width:841px;height:64px;border-radius:16px;background:#332f2e}hr{flex:none;width:1px;height:48px;border:0;margin:0 7px 0 4px;background:#232020}',
['files','brave','viv','code','term','wins','grid','find','obs','plan','set','ecl'].map(n=>`<dock-item name="${n}"${n=='viv'?' active run':''}${n=='plan'?' badge="3"':''}></dock-item>`).join('')+'<hr><dock-item name="edit" run></dock-item>');
reg('wall-paper',':host{display:block}svg{display:block}',`<svg width="1920" height="72" viewBox="0 0 1920 72">
<rect width="1920" height="72" fill="#3e3a37"/><rect width="767" height="72" fill="#b6a8bc"/><path d="M404 0L190 72H0V0z" fill="#7d7bc0"/><path d="M234 0h170L276 43z" fill="#5b59a8"/>
<path d="M0 0h48L0 20z" fill="#9a98d8"/><path d="M48 0L0 21M16 0v13" stroke="#2a285c" stroke-width="1.500" stroke-dasharray="22 4"/>
<path d="M276 43l41-15 28 34-54 1zM411 0h100l26 44-65 12z" fill="#866f89"/><path d="M291 63l54-1 13 10H240l36-28z" fill="#a191a2"/><path d="M317 28l94-28 61 56-100 10z" fill="#b7a8bc"/><path d="M317 28L404 0h7l61 56-106 16z" fill="#b9abbe"/><path d="M521 0h110l40 12H540z" fill="#cdc0d0"/><path d="M631 0h100l15 12h-70z" fill="#a28fa5"/><path d="M366 72l106-16 33 16z" fill="#cabdce"/>
<path d="M404 0L190 72M411 0l94 72M317 28l49 44M521 0l30 20M625 0l26 15M735 0l30 12M600 60l20 12M710 60l30 12" stroke="#54465e" stroke-width="1.800" fill="none"/>
<rect x="767" width="25" height="72" fill="#4b4643"/><rect x="1729" width="191" height="72" fill="#3f49b0"/><path d="M1897 0h23v8z" fill="#b3a0ae"/>
<path d="M1799 0l121 47M1849 0l71 26M1845 18l-29 16 104 40M1845 18l-10-4" stroke="#7b84d6" stroke-width="2.200" fill="none"/></svg>`);
reg('desk-top',':host{display:block;width:1920px;height:1080px;overflow:hidden}.b{display:flex;height:872px}.d{display:grid;height:72px}.d>*{grid-area:1/1}app-dock{margin:4px 0 0 539px}',
'<system-bar></system-bar><nav-bar></nav-bar><bookmark-bar></bookmark-bar><div class="b"><tab-strip></tab-strip><sheet-page></sheet-page><panel-bar></panel-bar></div><status-bar></status-bar><div class="d"><wall-paper></wall-paper><app-dock></app-dock></div>');
</script></body></html>
